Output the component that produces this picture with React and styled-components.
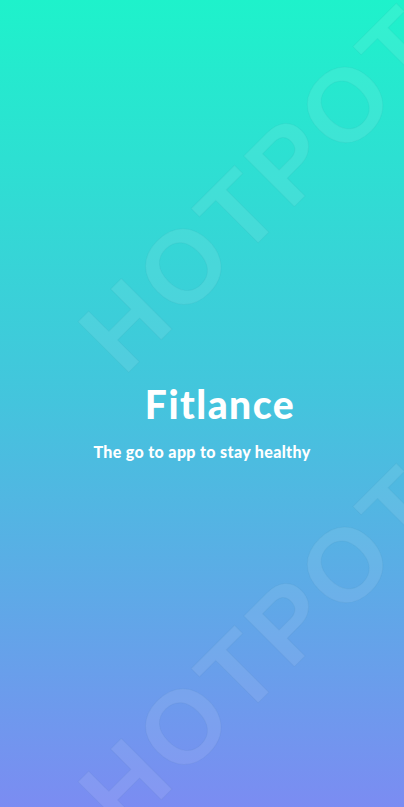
import React from "react";
import styled, { createGlobalStyle } from "styled-components";

const GlobalStyle = createGlobalStyle`
  html, body {
    margin: 0;
    padding: 0;
  }
  body {
    font-family: "Lato", "Liberation Sans", sans-serif;
  }
`;

const Screen = styled.div`
  position: relative;
  width: 404px;
  height: 807px;
  overflow: hidden;
  background: linear-gradient(180deg, #1ef2cb 0%, #44c4dd 50%, #7b8cf2 100%);
  display: flex;
  flex-direction: column;
  align-items: center;
  padding-top: 381px;
  box-sizing: border-box;
`;

const Title = styled.h1`
  margin: 0 0 0 36px;
  font-family: "Lato", sans-serif;
  font-weight: 900;
  font-size: 39px;
  line-height: 46px;
  letter-spacing: 1.5px;
  color: #ffffff;
`;

const Tagline = styled.p`
  margin: 15px 0 0;
  font-family: "Lato", sans-serif;
  font-weight: 900;
  font-size: 16px;
  line-height: 20px;
  letter-spacing: 0.35px;
  color: #ffffff;
`;

const Watermark = styled.span`
  position: absolute;
  left: ${(p) => p.x}px;
  top: ${(p) => p.y}px;
  transform: translate(-50%, -50%) rotate(-45deg);
  font-family: "Liberation Sans", sans-serif;
  font-weight: 700;
  font-size: 104px;
  letter-spacing: 5px;
  line-height: 1;
  white-space: nowrap;
  color: rgba(255, 255, 255, 0.09);
  -webkit-text-stroke: 1px rgba(40, 90, 120, 0.05);
  pointer-events: none;
  user-select: none;
`;

export default function App() {
  return (
    <>
      <GlobalStyle />
      <Screen>
        <Title>Fitlance</Title>
        <Tagline>The go to app to stay healthy</Tagline>
        <Watermark x={262} y={188}>HOTPOT</Watermark>
        <Watermark x={262} y={648}>HOTPOT</Watermark>
      </Screen>
    </>
  );
}
